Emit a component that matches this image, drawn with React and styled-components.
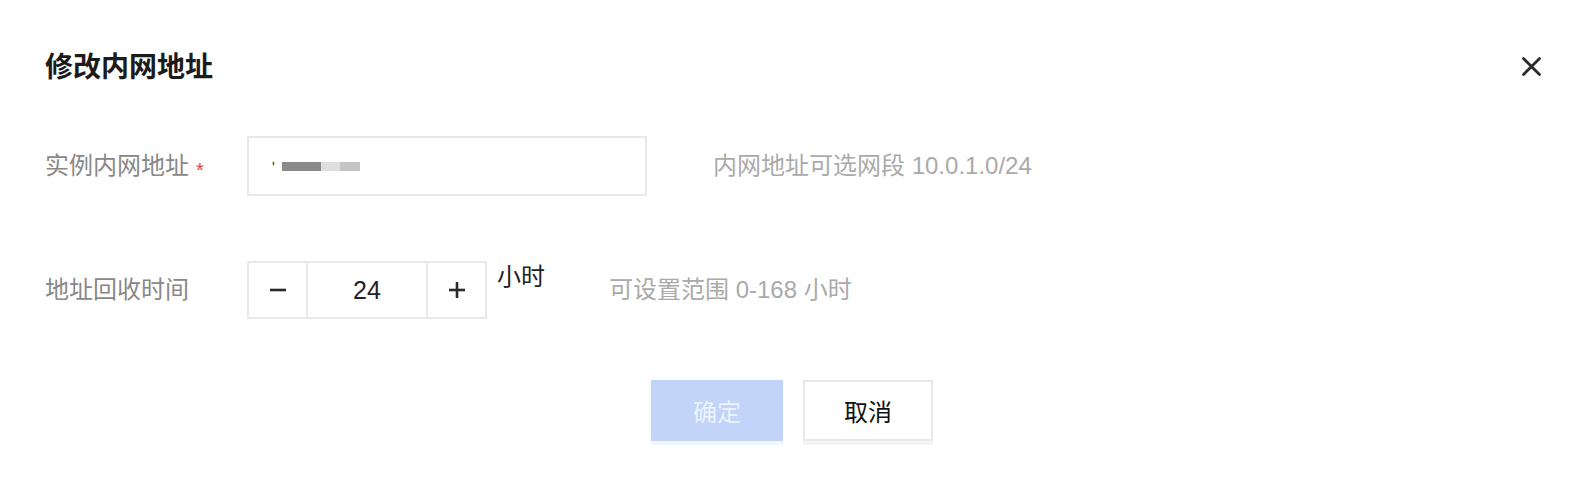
import styled, { createGlobalStyle } from 'styled-components'

const GlobalStyle = createGlobalStyle`
  body {
    margin: 0;
    background: #fff;
    font-family: 'Liberation Sans', 'Noto Sans CJK SC', sans-serif;
  }
`

const Dialog = styled.div`
  width: 1590px;
  height: 490px;
  box-sizing: border-box;
  padding: 48px 49px 0 45px;
  background: #fff;
`

const Header = styled.div`
  display: flex;
  align-items: center;
  justify-content: space-between;
  height: 40px;
`

const Title = styled.h2`
  margin: 0;
  font-size: 28px;
  line-height: 40px;
  font-weight: 700;
  color: #1b1b1b;
`

const Close = styled.button`
  display: flex;
  align-items: center;
  justify-content: center;
  width: 20px;
  height: 20px;
  padding: 0;
  border: none;
  background: none;
  margin-top: -4px;
  cursor: pointer;
`

const Form = styled.div`
  margin-top: 48px;
`

const Row = styled.div`
  display: flex;
  align-items: center;
  margin-top: ${p => p.$gap || 0}px;
`

const Label = styled.div`
  width: 202px;
  flex-shrink: 0;
  font-size: 24px;
  line-height: 32px;
  color: #888;
  display: flex;
  align-items: center;
`

const Required = styled.span`
  margin-left: 7px;
  color: #e54545;
  font-size: 20px;
  line-height: 20px;
  padding-top: 8px;
`

const Input = styled.div`
  width: 400px;
  height: 60px;
  box-sizing: border-box;
  border: 2px solid #e7e7ee;
  display: flex;
  align-items: center;
  padding-left: 23px;
`

const Tick = styled.span`
  font-size: 14px;
  color: #222;
  margin-right: 7px;
  margin-top: 2px;
`

const Blur = styled.span`
  display: inline-block;
  width: ${p => p.$w}px;
  height: 9px;
  background: ${p => p.$c};
`

const Hint = styled.div`
  margin-left: ${p => p.$gap}px;
  font-size: 24px;
  line-height: 32px;
  color: #aaa;
`

const Stepper = styled.div`
  display: flex;
  width: 240px;
  height: 58px;
  box-sizing: border-box;
  border: 2px solid #e7e7ee;
`

const StepButton = styled.button`
  width: 59px;
  flex-shrink: 0;
  padding: 0;
  border: none;
  border-${p => (p.$side === 'left' ? 'right' : 'left')}: 2px solid #e7e7ee;
  background: #fff;
  display: flex;
  align-items: center;
  justify-content: center;
  cursor: pointer;
`

const Value = styled.div`
  flex: 1;
  display: flex;
  align-items: center;
  justify-content: center;
  font-size: 25px;
  color: #222;
`

const Unit = styled.div`
  align-self: flex-start;
  margin-left: 10px;
  font-size: 24px;
  line-height: 32px;
  color: #222;
`

const Footer = styled.div`
  display: flex;
  justify-content: center;
  gap: 20px;
  margin-top: 61px;
  padding-right: 2px;
`

const Button = styled.button`
  min-width: ${p => (p.$primary ? 132 : 130)}px;
  height: 61px;
  box-sizing: border-box;
  padding: 0 30px;
  font-family: inherit;
  font-size: 24px;
  border: 2px solid ${p => (p.$primary ? '#c2d4f7' : '#e7e7ee')};
  background: ${p => (p.$primary ? '#c2d4f7' : '#fff')};
  color: ${p => (p.$primary ? '#edf2fc' : '#111')};
  box-shadow: 0 4px 0 ${p => (p.$primary ? '#f1f5fd' : '#f4f4f6')};
  cursor: ${p => (p.$primary ? 'not-allowed' : 'pointer')};
`

function Sign({ plus }) {
  return (
    <svg width="18" height="18" viewBox="0 0 18 18">
      <path d="M1 9h16" stroke="#2a2a2a" strokeWidth="2.6" />
      {plus && <path d="M9 1v16" stroke="#2a2a2a" strokeWidth="2.6" />}
    </svg>
  )
}

export default function App() {
  return (
    <>
      <GlobalStyle />
      <Dialog>
        <Header>
          <Title>修改内网地址</Title>
          <Close aria-label="关闭">
            <svg width="19" height="19" viewBox="0 0 19 19">
              <path d="M1.5 1.5l16 16M17.5 1.5l-16 16" stroke="#2b2b2b" strokeWidth="2.8" strokeLinecap="round" />
            </svg>
          </Close>
        </Header>

        <Form>
          <Row>
            <Label>
              实例内网地址<Required>*</Required>
            </Label>
            <Input>
              <Tick>'</Tick>
              <Blur $w={39} $c="#8a8a8a" />
              <Blur $w={19} $c="#dedede" />
              <Blur $w={20} $c="#c4c4c4" />
            </Input>
            <Hint $gap={66}>内网地址可选网段 10.0.1.0/24</Hint>
          </Row>

          <Row $gap={65}>
            <Label>地址回收时间</Label>
            <Stepper>
              <StepButton $side="left" aria-label="减少">
                <Sign />
              </StepButton>
              <Value>24</Value>
              <StepButton $side="right" aria-label="增加">
                <Sign plus />
              </StepButton>
            </Stepper>
            <Unit>小时</Unit>
            <Hint $gap={64}>可设置范围 0-168 小时</Hint>
          </Row>
        </Form>

        <Footer>
          <Button $primary disabled>确定</Button>
          <Button>取消</Button>
        </Footer>
      </Dialog>
    </>
  )
}
